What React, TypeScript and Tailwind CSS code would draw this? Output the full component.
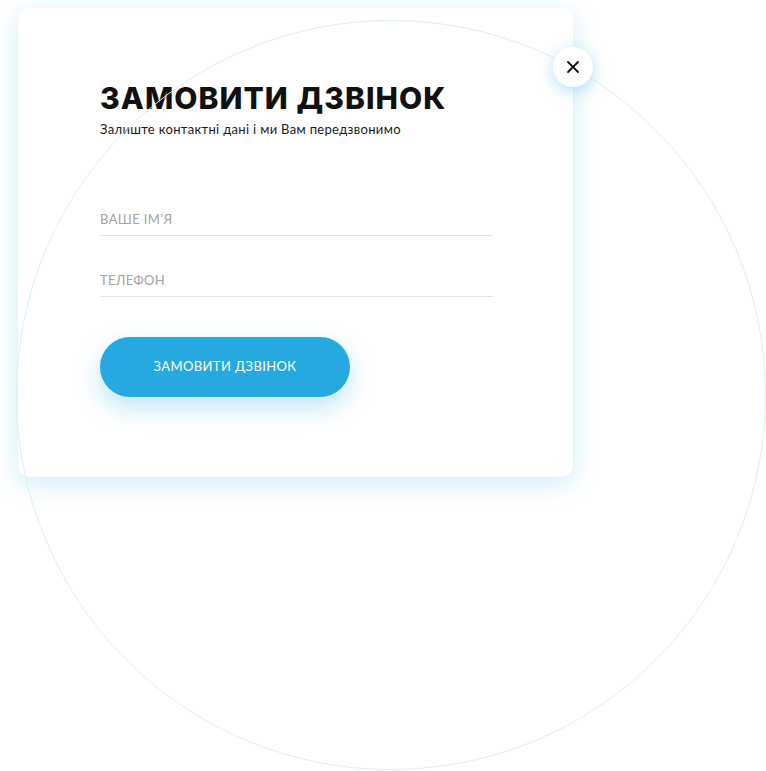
export default function App() {
   return (
      <div className="relative h-[771px] w-[766px] overflow-hidden bg-white font-['Lato',sans-serif]">
         <div className="ml-[18px] mt-[8px] flex h-[469px] w-[555px] flex-col rounded-[12px] bg-white pl-[82px] pt-[75px] shadow-[0_6px_24px_rgba(38,169,224,0.22)]">
            <h1 className="font-['Inter',sans-serif] text-[30px] font-extrabold leading-none tracking-[0.035em] text-[#111]">
               ЗАМОВИТИ ДЗВІНОК
            </h1>
            <p className="mt-[8px] text-[13px] leading-[16px] tracking-[0.025em] text-[#1a1a1a]">
               Залиште контактні дані і ми Вам передзвонимо
            </p>
            <div className="mt-[66px] w-[393px]">
               <input
                  className="block h-[33px] w-full border-b border-[#e2e2e2] bg-transparent text-[13px] uppercase tracking-[0.03em] text-[#333] outline-none placeholder:text-[#a3a3a3]"
                  placeholder="ВАШЕ ІМ’Я"
               />
               <input
                  className="mt-[28px] block h-[33px] w-full border-b border-[#e2e2e2] bg-transparent text-[13px] uppercase tracking-[0.03em] text-[#333] outline-none placeholder:text-[#a3a3a3]"
                  placeholder="ТЕЛЕФОН"
               />
            </div>
            <button className="mt-[40px] h-[60px] w-[250px] rounded-full bg-[#26a9e1] text-[13px] uppercase tracking-[0.03em] text-white shadow-[0_10px_24px_rgba(38,169,224,0.3)]">
               Замовити дзвінок
            </button>
         </div>
         <div className="pointer-events-none absolute left-[16px] top-[20px] h-[750px] w-[750px] rounded-full border border-[#d9eff9]" />
         <button className="absolute left-[553px] top-[47px] flex h-[40px] w-[40px] items-center justify-center rounded-full bg-white shadow-[0_4px_16px_rgba(38,169,224,0.35)]">
            <svg width="14" height="14" viewBox="0 0 14 14" fill="none" stroke="#111" strokeWidth="1.8" strokeLinecap="round">
               <path d="M2 2L12 12M12 2L2 12" />
            </svg>
         </button>
      </div>
   )
}
